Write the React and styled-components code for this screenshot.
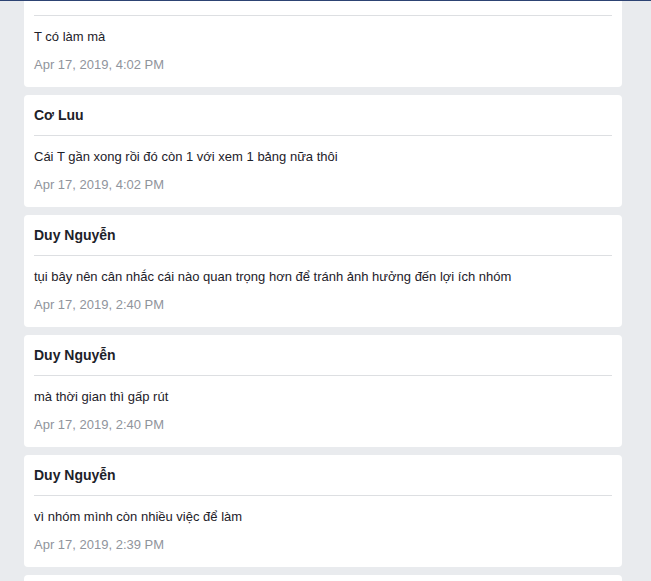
import React from 'react';
import styled, { createGlobalStyle } from 'styled-components';

const GlobalStyle = createGlobalStyle`
  html, body {
    margin: 0;
    padding: 0;
    background: #e9ebee;
    font-family: "Liberation Sans", Arial, sans-serif;
    overflow: hidden;
  }
`

const Page = styled.div`
  height: 581px;
  border-top: 1px solid #2d4373;
  box-sizing: border-box;
  overflow: hidden;
`

const Feed = styled.div`
  display: flex;
  flex-direction: column;
  gap: 8px;
  margin-top: -26px;
  padding: 0 29px 0 24px;
`

const Card = styled.div`
  background: #fff;
  border-radius: 4px;
  padding: 10px 10px 12px;
`

const Author = styled.div`
  font-size: 14px;
  line-height: 20px;
  font-weight: bold;
  color: #1d2129;
  padding-bottom: 10px;
  border-bottom: 1px solid #dddfe2;
`

const Body = styled.div`
  font-size: 13px;
  line-height: 20px;
  color: #1d2129;
  margin-top: 11px;
`

const Stamp = styled.div`
  font-size: 13px;
  line-height: 20px;
  color: #90949c;
  margin-top: 8px;
`

const messages = [
  { author: 'Cơ Luu', text: 'T có làm mà', time: 'Apr 17, 2019, 4:02 PM' },
  { author: 'Cơ Luu', text: 'Cái T gần xong rồi đó còn 1 với xem 1 bảng nữa thôi', time: 'Apr 17, 2019, 4:02 PM' },
  { author: 'Duy Nguyễn', text: 'tụi bây nên cân nhắc cái nào quan trọng hơn để tránh ảnh hưởng đến lợi ích nhóm', time: 'Apr 17, 2019, 2:40 PM' },
  { author: 'Duy Nguyễn', text: 'mà thời gian thì gấp rút', time: 'Apr 17, 2019, 2:40 PM' },
  { author: 'Duy Nguyễn', text: 'vì nhóm mình còn nhiều việc để làm', time: 'Apr 17, 2019, 2:39 PM' },
  { author: 'Duy Nguyễn', text: 'ok', time: 'Apr 17, 2019, 2:39 PM' },
]

export default function App() {
  return (
    <Page>
      <GlobalStyle />
      <Feed>
        {messages.map((m, i) => (
          <Card key={i}>
            <Author>{m.author}</Author>
            <Body>{m.text}</Body>
            <Stamp>{m.time}</Stamp>
          </Card>
        ))}
      </Feed>
    </Page>
  )
}
